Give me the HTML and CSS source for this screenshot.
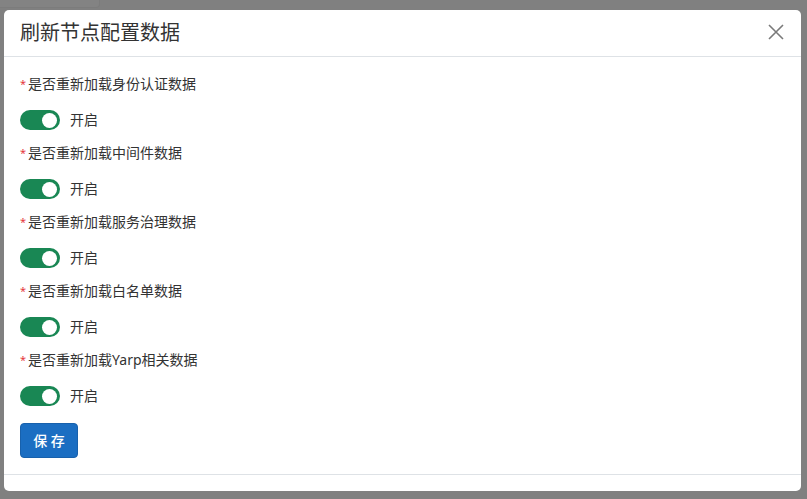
FILE: index.html
```html
<!DOCTYPE html>
<html lang="zh-CN">
<head>
<meta charset="utf-8">
<title>刷新节点配置数据</title>
<link rel="stylesheet" href="styles.css">
</head>
<body>
<div class="backdrop">
  <div class="behind"></div>
  <div class="modal">
    <div class="modal-header">
      <h5 class="modal-title">刷新节点配置数据</h5>
      <button class="btn-close" aria-label="Close">
        <svg width="16" height="16" viewBox="0 0 16 16"><path d="M1 1 L15 15 M15 1 L1 15" stroke="#7a7a7a" stroke-width="1.6" fill="none"/></svg>
      </button>
    </div>
    <div class="modal-body">
      <div class="field">
        <label class="field-label"><span class="req">*</span>是否重新加载身份认证数据</label>
        <div class="switch-row"><span class="switch"><span class="knob"></span></span><span class="switch-text">开启</span></div>
      </div>
      <div class="field">
        <label class="field-label"><span class="req">*</span>是否重新加载中间件数据</label>
        <div class="switch-row"><span class="switch"><span class="knob"></span></span><span class="switch-text">开启</span></div>
      </div>
      <div class="field">
        <label class="field-label"><span class="req">*</span>是否重新加载服务治理数据</label>
        <div class="switch-row"><span class="switch"><span class="knob"></span></span><span class="switch-text">开启</span></div>
      </div>
      <div class="field">
        <label class="field-label"><span class="req">*</span>是否重新加载白名单数据</label>
        <div class="switch-row"><span class="switch"><span class="knob"></span></span><span class="switch-text">开启</span></div>
      </div>
      <div class="field last">
        <label class="field-label"><span class="req">*</span>是否重新加载Yarp相关数据</label>
        <div class="switch-row"><span class="switch"><span class="knob"></span></span><span class="switch-text">开启</span></div>
      </div>
      <button class="btn-primary">保 存</button>
    </div>
    <div class="modal-footer"></div>
  </div>
</div>
</body>
</html>
```

FILE: styles.css
```css
html, body {
  margin: 0;
  padding: 0;
}
body {
  background: #808080;
  font-family: "Noto Sans", "Noto Sans CJK SC", sans-serif;
  color: #333;
  width: 807px;
  height: 499px;
  overflow: hidden;
}
.backdrop {
  padding: 0 6px 0 4px;
}
.behind {
  height: 8px;
  width: 100px;
  margin-left: -4px;
  border-bottom: 1px solid #7c7c7c;
  border-right: 1px solid #7c7c7c;
  border-radius: 0 0 4px 0;
  background: #838383;
  box-sizing: border-box;
  margin-bottom: 2px;
}
.modal {
  width: 797px;
  height: 481px;
  background: #fff;
  border-radius: 5px;
  display: flex;
  flex-direction: column;
  overflow: hidden;
}
.modal-header {
  display: flex;
  align-items: center;
  justify-content: space-between;
  padding: 11px 17px 11px 16px;
  border-bottom: 1px solid #dee2e6;
}
.modal-title {
  margin: 0;
  font-size: 20px;
  line-height: 24px;
  font-weight: 400;
  color: #333;
}
.btn-close {
  border: 0;
  background: transparent;
  padding: 0;
  width: 16px;
  height: 16px;
  display: flex;
  margin-top: -2px;
}
.modal-body {
  padding: 16px;
  flex: 1;
}
.field {
  margin-bottom: 12px;
}
.field.last {
  margin-bottom: 17px;
}
.field-label {
  display: block;
  font-size: 14px;
  line-height: 21px;
  height: 21px;
  margin-bottom: 16px;
  color: #333;
}
.req {
  color: #e5383b;
  font-size: 11px;
  margin-right: 2px;
  vertical-align: 1px;
}
.switch-row {
  display: flex;
  align-items: center;
  height: 20px;
}
.switch {
  width: 40px;
  height: 20px;
  border-radius: 10px;
  background: #198754;
  display: flex;
  align-items: center;
  justify-content: flex-end;
  padding: 0 3px;
  box-sizing: border-box;
}
.knob {
  width: 15px;
  height: 15px;
  border-radius: 50%;
  background: #fff;
}
.switch-text {
  margin-left: 10px;
  font-size: 14px;
  line-height: 20px;
  color: #333;
}
.btn-primary {
  display: block;
  width: 58px;
  height: 35px;
  padding: 0;
  border: 1px solid #1861ac;
  background: #1b6ec2;
  color: #fff;
  border-radius: 4px;
  font-family: "Noto Sans", "Noto Sans CJK SC", sans-serif;
  font-size: 14px;
  line-height: 21px;
  font-weight: 500;
}
.modal-footer {
  border-top: 1px solid #dee2e6;
  height: 16px;
}
```
